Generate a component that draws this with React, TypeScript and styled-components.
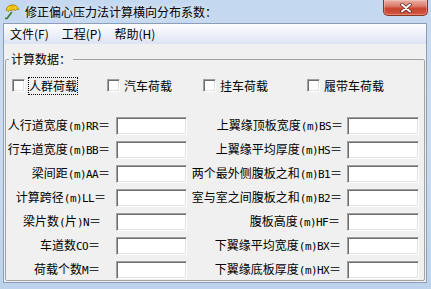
import React from 'react';
import styled, { createGlobalStyle } from 'styled-components';

const CN = `"Noto Sans CJK SC", "Microsoft YaHei", sans-serif`;

const GlobalStyle = createGlobalStyle`
  html, body {
    margin: 0;
    padding: 0;
  }
  body {
    width: 431px;
    height: 289px;
    overflow: hidden;
    background: #c2d6ee;
  }
`;

const leftRows = [
  { text: '人行道宽度(m)RR＝', inset: 2 },
  { text: '行车道宽度(m)BB＝', inset: 2 },
  { text: '梁间距(m)AA＝', inset: 2 },
  { text: '计算跨径(m)LL＝', inset: 6 },
  { text: '梁片数(片)N＝', inset: 11 },
  { text: '车道数CO＝', inset: 12 },
  { text: '荷载个数M＝', inset: 12 },
];

const rightRows = [
  { text: '上翼缘顶板宽度(m)BS＝', inset: 0 },
  { text: '上翼缘平均厚度(m)HS＝', inset: 1 },
  { text: '两个最外侧腹板之和(m)B1＝', inset: 1 },
  { text: '室与室之间腹板之和(m)B2＝', inset: 1 },
  { text: '腹板高度(m)HF＝', inset: 3 },
  { text: '下翼缘平均宽度(m)BX＝', inset: 2 },
  { text: '下翼缘底板厚度(m)HX＝', inset: 2 },
];

const loads = [
  { text: '人群荷载', width: 95, focused: true },
  { text: '汽车荷载', width: 96 },
  { text: '挂车荷载', width: 104 },
  { text: '履带车荷载' },
];

// ascii bits of a label are drawn in a narrow fixed font, like the original dialog
const LabelText = ({ text }: { text: string }) => (
  <>
    {text.split(/([\x21-\x7e]+)/).map((part, i) =>
      /[\x21-\x7e]/.test(part) ? <Code key={i}>{part}</Code> : <span key={i}>{part}</span>
    )}
  </>
);

const AppIcon = () => (
  <svg width="16" height="16" viewBox="0 0 16 16">
    <path d="M7.5 8.5 L3.2 14.2" stroke="#3f7a2a" strokeWidth="1.6" strokeLinecap="round" />
    <path d="M3.2 14.2 Q2 15.4 1.4 14" stroke="#3f7a2a" strokeWidth="1.3" fill="none" strokeLinecap="round" />
    <path d="M2.2 6.2 A6.4 6.4 0 0 1 14.6 5.4 Q12.8 4.6 11.4 6.4 Q9.6 4.8 7.6 6.6 Q5.4 5.2 4 7.4 Q3.2 6 2.2 6.2 Z" fill="#f7d21a" stroke="#a27d05" strokeWidth="0.9" strokeLinejoin="round" />
    <path d="M8.4 1 L7.6 6.6 M8.4 1 L11.4 6.4 M8.4 1 L4 7.4" stroke="#d9a308" strokeWidth="0.6" />
  </svg>
);

const App: React.FC = () => {
  return (
    <>
      <GlobalStyle />
      <Window>
        <TitleBar>
          <AppIcon />
          <Title>修正偏心压力法计算横向分布系数：</Title>
          <CloseButton>
            <svg width="12" height="10" viewBox="0 0 12 10">
              <path d="M2 1.5 L10 8.5 M10 1.5 L2 8.5" stroke="#5a1e16" strokeWidth="3.4" strokeLinecap="round" />
              <path d="M2 1.5 L10 8.5 M10 1.5 L2 8.5" stroke="#fff" strokeWidth="2" strokeLinecap="round" />
            </svg>
          </CloseButton>
        </TitleBar>
        <Client>
          <MenuBar>
            <MenuItem>文件(F)</MenuItem>
            <MenuItem>工程(P)</MenuItem>
            <MenuItem>帮助(H)</MenuItem>
          </MenuBar>
          <Group>
            <Legend>计算数据：</Legend>
            <CheckRow>
              {loads.map((l) => (
                <CheckItem key={l.text} $width={l.width}>
                  <CheckBox />
                  <CheckLabel $focused={l.focused}>{l.text}</CheckLabel>
                </CheckItem>
              ))}
            </CheckRow>
            <FieldGrid>
              {leftRows.map((row, i) => (
                <React.Fragment key={row.text}>
                  <FieldLabel $inset={row.inset}>
                    <LabelText text={row.text} />
                  </FieldLabel>
                  <TextBox />
                  <FieldLabel $inset={rightRows[i].inset}>
                    <LabelText text={rightRows[i].text} />
                  </FieldLabel>
                  <TextBox />
                </React.Fragment>
              ))}
            </FieldGrid>
          </Group>
        </Client>
      </Window>
    </>
  );
};

export default App;

const Window = styled.div`
  width: 431px;
  height: 289px;
  box-sizing: border-box;
  display: flex;
  flex-direction: column;
  background: linear-gradient(180deg, #c4d8ef 0%, #cadcf1 45%, #bdd3ec 100%);
  font-family: ${CN};
  font-size: 12px;
  color: #000;
`;

const TitleBar = styled.div`
  height: 23px;
  display: flex;
  align-items: center;
  padding-left: 4px;
  flex: none;
`;

const Title = styled.div`
  margin-left: 5px;
  line-height: 16px;
  text-shadow: 0 0 6px rgba(255, 255, 255, 0.9);
`;

const CloseButton = styled.div`
  align-self: flex-start;
  margin-left: auto;
  margin-right: 3px;
  width: 45px;
  height: 16px;
  box-sizing: border-box;
  display: flex;
  align-items: center;
  justify-content: center;
  border: 1px solid #8b3426;
  border-top: none;
  border-radius: 0 0 5px 5px;
  background: linear-gradient(180deg, #eab1a6 0%, #dc7d6c 40%, #c8432f 58%, #d15a42 100%);
  box-shadow: inset 0 0 0 1px rgba(255, 220, 210, 0.35);
`;

const Client = styled.div`
  flex: 1;
  margin: 0 4px 6px 3px;
  border: 1px solid #8c9eb6;
  background: #f0f0f0;
  display: flex;
  flex-direction: column;
  min-height: 0;
`;

const MenuBar = styled.div`
  height: 20px;
  flex: none;
  display: flex;
  align-items: center;
  background: linear-gradient(180deg, #fdfdff 0%, #f0f2fa 45%, #dde3f3 100%);
`;

const MenuItem = styled.div`
  padding: 0 6px;
  line-height: 16px;
  margin-right: 1px;
`;

const Group = styled.fieldset`
  flex: 1;
  min-width: 0;
  margin: 7px 1px 1px 1px;
  padding: 10px 0 0 0;
  border: 1px solid #a3a3a3;
  border-radius: 2px;
`;

const Legend = styled.legend`
  margin-left: 3px;
  padding: 0 2px;
  line-height: 16px;
  font-size: 12px;
`;

const CheckRow = styled.div`
  display: flex;
  align-items: center;
  height: 17px;
  padding-left: 6px;
`;

const CheckItem = styled.div<{ $width?: number }>`
  display: flex;
  align-items: center;
  gap: 4px;
  width: ${(p) => (p.$width ? `${p.$width}px` : 'auto')};
  flex: none;
`;

const CheckBox = styled.span`
  width: 13px;
  height: 13px;
  box-sizing: border-box;
  flex: none;
  background: #fff;
  border: 1px solid;
  border-color: #a0a0a0 #ffffff #ffffff #a0a0a0;
  box-shadow: inset 1px 1px #6d6d6d, inset -1px -1px #e3e3e3;
`;

const CheckLabel = styled.span<{ $focused?: boolean }>`
  line-height: 16px;
  outline: ${(p) => (p.$focused ? '1px dotted #000' : 'none')};
  outline-offset: 0px;
`;

const FieldGrid = styled.div`
  display: grid;
  grid-template-columns: 106px 71px 152px 72px;
  grid-auto-rows: 18px;
  column-gap: 4px;
  row-gap: 6px;
  align-items: center;
  margin-top: 23px;
`;

const FieldLabel = styled.div<{ $inset: number }>`
  text-align: right;
  white-space: nowrap;
  line-height: 16px;
  padding-right: ${(p) => p.$inset}px;
`;

const Code = styled.span`
  font-family: "DejaVu Sans Mono", "Noto Sans CJK SC", monospace;
  font-size: 11px;
  letter-spacing: -0.6px;
`;

const TextBox = styled.div`
  height: 18px;
  box-sizing: border-box;
  background: #fff;
  border: 1px solid;
  border-color: #a0a0a0 #ffffff #ffffff #a0a0a0;
  box-shadow: inset 1px 1px #6d6d6d, inset -1px -1px #e3e3e3;
`;
